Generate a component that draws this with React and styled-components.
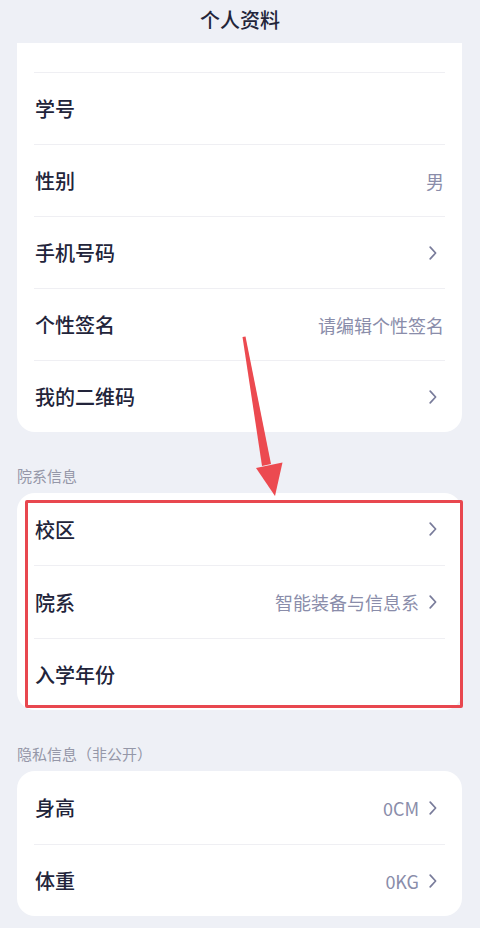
import styled, { createGlobalStyle } from 'styled-components';

const GlobalStyle = createGlobalStyle`
  html, body {
    margin: 0;
    padding: 0;
    background: #eef0f6;
  }
  body {
    font-family: "Noto Sans CJK SC", "Noto Sans", sans-serif;
    -webkit-font-smoothing: antialiased;
  }
`;

const Page = styled.div`
  position: relative;
  width: 480px;
  height: 928px;
  overflow: hidden;
  background: #eef0f6;
`;

const Header = styled.div`
  height: 43px;
  display: flex;
  justify-content: center;
  align-items: flex-start;
  padding-top: 6px;
  box-sizing: border-box;
  font-size: 20px;
  line-height: 28px;
  font-weight: 500;
  color: #23253a;
`;

const Card = styled.div`
  position: relative;
  margin: 0 18px 0 17px;
  padding: 0 17px;
  background: #ffffff;
  border-radius: ${(p) => (p.$cut ? '0 0 18px 18px' : '18px')};
`;

const Row = styled.div`
  height: ${(p) => p.$h || 72}px;
  box-sizing: border-box;
  display: flex;
  align-items: center;
  justify-content: space-between;
  border-top: ${(p) => (p.$first ? 'none' : '1px solid #efeff3')};
`;

const Label = styled.span`
  font-size: 20px;
  font-weight: 500;
  color: #22243a;
  padding-left: 1px;
`;

const Value = styled.span`
  display: flex;
  align-items: center;
  gap: 10px;
  font-size: 18px;
  color: #8a8daa;
  padding-right: ${(p) => (p.$chev ? '8px' : '1px')};
`;

const SectionTitle = styled.div`
  padding: 34px 17px 7px;
  font-size: 15px;
  line-height: 20px;
  color: #9597a8;
`;

const Highlight = styled.div`
  position: absolute;
  top: 7px;
  left: 8px;
  right: -1px;
  bottom: 2px;
  border: 3px solid #e8474f;
  border-radius: 2px;
  pointer-events: none;
`;

const Arrow = styled.svg`
  position: absolute;
  left: 0;
  top: 0;
  pointer-events: none;
`;

const Chevron = () => (
  <svg width="8" height="14" viewBox="0 0 8 14">
    <path d="M1.2 1.2 L6.6 7 L1.2 12.8" fill="none" stroke="#787b9a" strokeWidth="1.7" strokeLinecap="round" strokeLinejoin="round" />
  </svg>
);

const Item = ({ label, value, chev, first, h }) => (
  <Row $first={first} $h={h}>
    {label ? <Label>{label}</Label> : <span />}
    <Value $chev={chev}>
      {value}
      {chev && <Chevron />}
    </Value>
  </Row>
);

export default function App() {
  return (
    <Page>
      <GlobalStyle />
      <Header>个人资料</Header>
      <Card $cut>
        <Row $first $h={29} />
        <Item label="学号" />
        <Item label="性别" value="男" />
        <Item label="手机号码" chev />
        <Item label="个性签名" value="请编辑个性签名" />
        <Item label="我的二维码" chev />
      </Card>

      <SectionTitle>院系信息</SectionTitle>
      <Card>
        <Item label="校区" chev first />
        <Item label="院系" value="智能装备与信息系" chev h={73} />
        <Item label="入学年份" />
        <Highlight />
      </Card>

      <SectionTitle>隐私信息（非公开）</SectionTitle>
      <Card>
        <Item label="身高" value="0CM" chev first h={73} />
        <Item label="体重" value="0KG" chev h={72} />
      </Card>

      <Arrow width="480" height="928" viewBox="0 0 480 928">
        <polygon points="242.5,337 245.5,336.5 271,464 262,466" fill="#ec4a50" />
        <polygon points="256,468 282.5,462.5 275,496" fill="#ec4a50" />
      </Arrow>
    </Page>
  );
}
